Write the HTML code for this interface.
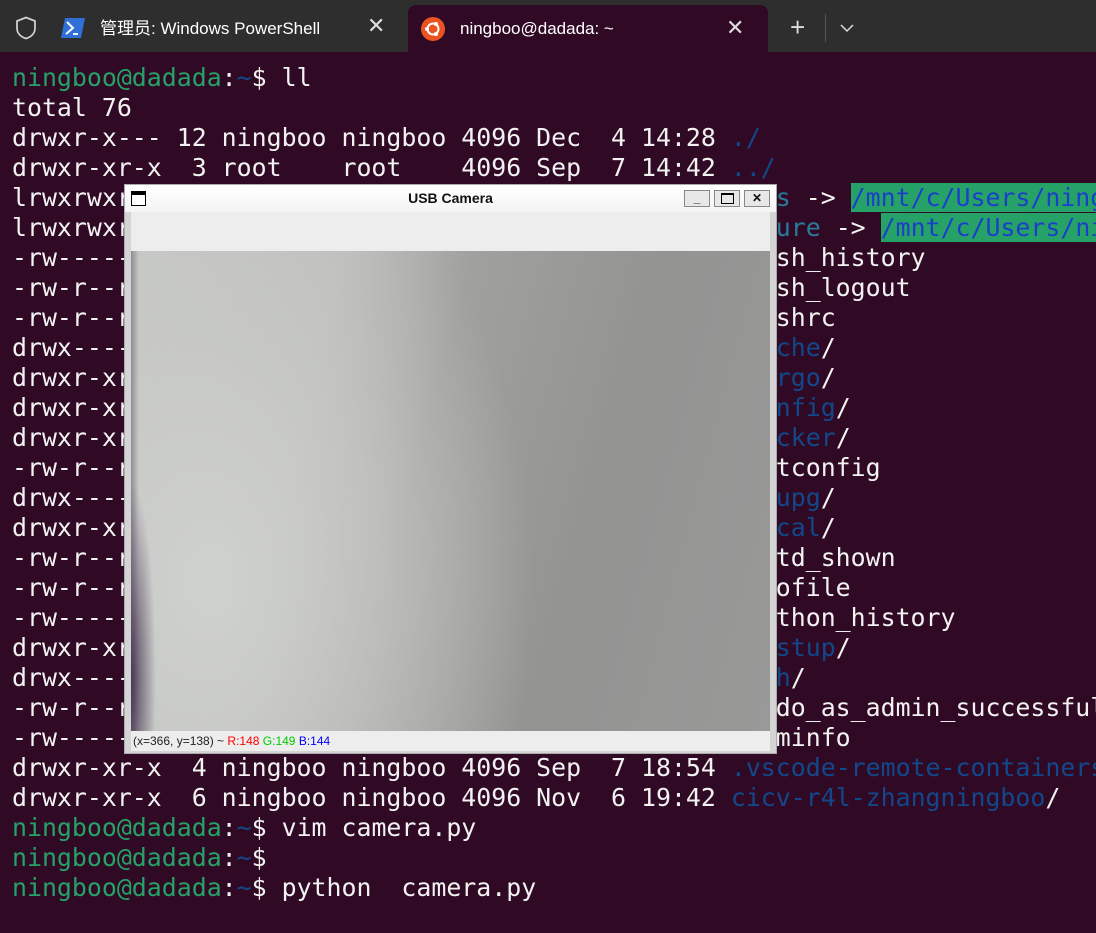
<!DOCTYPE html>
<html><head><meta charset="utf-8"><style>
*{margin:0;padding:0;box-sizing:border-box}
body{width:1096px;height:933px;overflow:hidden;background:#300a24;position:relative;font-family:"Liberation Sans",sans-serif}
#tabs{position:absolute;left:0;top:0;width:1096px;height:52px;background:#2e2e2e}
.tab{position:absolute;top:5px;height:47px;color:#fff;font-size:17px;line-height:47px}
#t2{left:408px;width:360px;background:#300a24;border-radius:8px 8px 0 0}
.x{position:absolute;font-size:22px;font-weight:300;color:#ddd}
#term{position:absolute;left:12px;top:63px;width:1084px;overflow:hidden;font-family:"DejaVu Sans Mono",monospace;font-size:24.88px;line-height:30px;color:#f2f2f2;white-space:pre}
.g{color:#26a269}.b{color:#12488b}.c{color:#2a7b9b}.h{background:#26a269;color:#1a3fc9}
#win{position:absolute;left:124px;top:184px;width:653px;height:570px;background:#d4d4d4;border:1px solid #aaa}
#title{position:absolute;left:0;top:0;width:651px;height:27px;background:linear-gradient(#fff,#f4f4f4);font-size:14px;font-weight:bold;text-align:center;line-height:26px;color:#111}
#tool{position:absolute;left:6px;top:27px;width:639px;height:39px;background:#ededed}
#cam{position:absolute;left:6px;top:66px;width:639px;height:480px;
background:
radial-gradient(ellipse 25px 200px at 0px 430px,rgba(60,40,70,.85),rgba(60,40,70,0)),
linear-gradient(90deg,rgba(90,80,100,.5) 0px,rgba(200,200,200,0) 8px),
radial-gradient(ellipse 380px 560px at 80px 330px,#cfd1ce 0%,rgba(200,202,200,.7) 45%,rgba(160,160,160,0) 85%),
linear-gradient(105deg,#c6c7c5 0%,#bdbdbb 28%,#a0a09e 45%,#939392 70%,#999998 100%)}
#status{position:absolute;left:6px;top:546px;width:639px;height:20px;background:#ededed;font-size:12px;line-height:20px;padding-left:2px;color:#222}
.bt{position:absolute;top:5px;width:26px;height:17px;border:1px solid #888;background:#e8e8e8;font-size:12px;text-align:center;line-height:15px}
</style></head><body>
<div id="tabs">
 <svg style="position:absolute;left:15px;top:16px" width="22" height="24" viewBox="0 0 22 24"><path d="M11 1.5 L20 5 V12 C20 17.5 16 21 11 22.5 C6 21 2 17.5 2 12 V5 Z" fill="none" stroke="#cfcfcf" stroke-width="1.8"/></svg>
 <svg style="position:absolute;left:61px;top:18px" width="24" height="20" viewBox="0 0 24 20"><path d="M4 0 H24 L20 20 H0 Z" fill="#2f6fd6"/><path d="M6 4 L12 10 L5 16" fill="none" stroke="#fff" stroke-width="2"/><path d="M12 16 H17" stroke="#fff" stroke-width="2"/></svg>
 <div class="tab" style="left:100px;font-family:'Liberation Sans','Noto Sans CJK SC',sans-serif">管理员: Windows PowerShell</div>
 <div class="x" style="left:367px;top:13px">✕</div>
 <div class="tab" id="t2">
  <svg style="position:absolute;left:13px;top:12px" width="24" height="24" viewBox="0 0 24 24"><circle cx="12" cy="12" r="12" fill="#e95420"/><circle cx="12" cy="12" r="5.5" fill="none" stroke="#fff" stroke-width="2"/><circle cx="6" cy="12" r="2" fill="#fff"/><circle cx="15" cy="7" r="2" fill="#fff"/><circle cx="15" cy="17" r="2" fill="#fff"/></svg>
  <span style="position:absolute;left:52px">ningboo@dadada: ~</span>
  <div class="x" style="left:318px;top:8px;line-height:30px">✕</div>
 </div>
 <div class="x" style="left:790px;top:12px;font-size:26px">+</div>
 <div style="position:absolute;left:825px;top:14px;width:1px;height:28px;background:#555"></div>
 <svg style="position:absolute;left:840px;top:24px" width="14" height="9" viewBox="0 0 14 9"><path d="M1 1 L7 7 L13 1" fill="none" stroke="#ddd" stroke-width="1.5"/></svg>
</div>
<div id="term"><span class="g">ningboo@dadada</span>:<span class="b">~</span>$ ll
total 76
drwxr-x--- 12 ningboo ningboo 4096 Dec  4 14:28 <span class="b">./</span>
drwxr-xr-x  3 root    root    4096 Sep  7 14:42 <span class="b">../</span>
lrwxrwxrwx  1 ningboo ningboo   28 Sep  7 14:45 <span class="c">docs</span> -&gt; <span class="h">/mnt/c/Users/ningboo/Documents</span>
lrwxrwxrwx  1 ningboo ningboo   27 Sep  7 14:45 <span class="c">figure</span> -&gt; <span class="h">/mnt/c/Users/ningboo/Pictures</span>
-rw-------  1 ningboo ningboo 9999 Dec  4 14:28 .bash_history
-rw-r--r--  1 ningboo ningboo  220 Sep  7 14:42 .bash_logout
-rw-r--r--  1 ningboo ningboo 3771 Sep  7 14:42 .bashrc
drwx------  4 ningboo ningboo 4096 Sep  7 14:45 <span class="b">.cache</span>/
drwxr-xr-x  3 ningboo ningboo 4096 Sep  7 14:45 <span class="b">.cargo</span>/
drwxr-xr-x  3 ningboo ningboo 4096 Sep  7 14:45 <span class="b">.config</span>/
drwxr-xr-x  2 ningboo ningboo 4096 Sep  7 14:45 <span class="b">.docker</span>/
-rw-r--r--  1 ningboo ningboo   60 Sep  7 14:45 .gitconfig
drwx------  3 ningboo ningboo 4096 Sep  7 14:45 <span class="b">.gnupg</span>/
drwxr-xr-x  3 ningboo ningboo 4096 Sep  7 14:45 <span class="b">.local</span>/
-rw-r--r--  1 ningboo ningboo    0 Sep  7 14:45 .motd_shown
-rw-r--r--  1 ningboo ningboo  807 Sep  7 14:42 .profile
-rw-------  1 ningboo ningboo  100 Sep  7 14:45 .python_history
drwxr-xr-x  6 ningboo ningboo 4096 Sep  7 14:45 <span class="b">.rustup</span>/
drwx------  2 ningboo ningboo 4096 Sep  7 14:45 <span class="b">.ssh</span>/
-rw-r--r--  1 ningboo ningboo    0 Sep  7 14:45 .sudo_as_admin_successful
-rw-------  1 ningboo ningboo 9999 Sep  7 14:45 .viminfo
drwxr-xr-x  4 ningboo ningboo 4096 Sep  7 18:54 <span class="b">.vscode-remote-containers</span>/
drwxr-xr-x  6 ningboo ningboo 4096 Nov  6 19:42 <span class="b">cicv-r4l-zhangningboo</span>/
<span class="g">ningboo@dadada</span>:<span class="b">~</span>$ vim camera.py
<span class="g">ningboo@dadada</span>:<span class="b">~</span>$
<span class="g">ningboo@dadada</span>:<span class="b">~</span>$ python  camera.py</div>
<div id="win">
 <div id="title">
  <div style="position:absolute;left:6px;top:6px;width:15px;height:15px;border:1.5px solid #000;border-top-width:4px;background:#fff"></div>
  USB Camera
  <div class="bt" style="left:559px">_</div>
  <div class="bt" style="left:589px"><div style="margin:2px auto;width:13px;height:11px;border:1.5px solid #000;border-top-width:2px"></div></div>
  <div class="bt" style="left:619px;font-weight:bold">✕</div>
 </div>
 <div id="tool"></div>
 <div id="cam"></div>
 <div id="status">(x=366, y=138) ~ <span style="color:#f00">R:148</span> <span style="color:#0c0">G:149</span> <span style="color:#00f">B:144</span></div>
</div>
</body></html>
